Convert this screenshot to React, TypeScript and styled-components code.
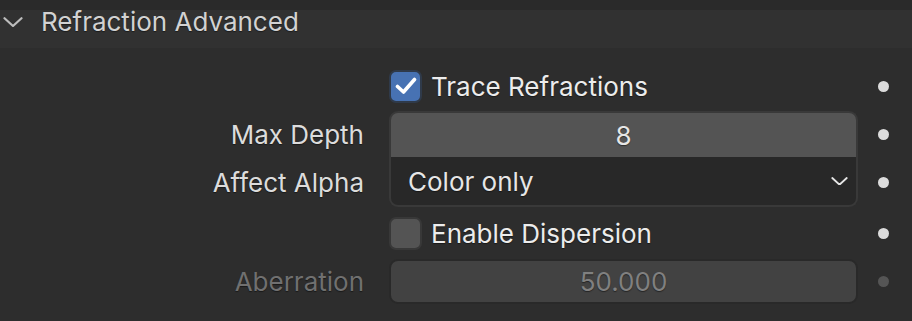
import styled, { createGlobalStyle } from "styled-components"

const GlobalStyle = createGlobalStyle`
  html, body {
    margin: 0;
    padding: 0;
    background: #2d2d2d;
  }
  body {
    width: 912px;
    height: 321px;
    overflow: hidden;
    font-family: Inter, "Noto Sans", sans-serif;
  }
`

const ChevronDown: React.FC<{ size?: number; color?: string }> = ({ size = 20, color = "#bdbdbd" }) => (
  <svg width={size} height={size * 0.5} viewBox="0 0 20 10" fill="none" style={{ display: "block" }}>
    <path d="M1.5 1.2 L10 9 L18.5 1.2" stroke={color} strokeWidth="2.2" strokeLinecap="round" strokeLinejoin="round" />
  </svg>
)

const CheckMark: React.FC = () => (
  <svg width="22" height="18" viewBox="0 0 22 18" fill="none" style={{ display: "block" }}>
    <path d="M2.5 9.5 L8.5 15 L19.5 2.5" stroke="#ffffff" strokeWidth="3.6" strokeLinecap="round" strokeLinejoin="round" />
  </svg>
)

type RowProps = { label?: string; height: number; muted?: boolean; children: React.ReactNode }

const PropRow: React.FC<RowProps> = ({ label, height, muted, children }) => (
  <Row $height={height}>
    <Label $muted={muted}>{label}</Label>
    <Control>{children}</Control>
    <DotCell>
      <Dot $muted={muted} />
    </DotCell>
  </Row>
)

const App: React.FC = () => {
  return (
    <>
      <GlobalStyle />
      <Panel>
        <Header>
          <HeaderIcon>
            <ChevronDown />
          </HeaderIcon>
          <HeaderTitle>Refraction Advanced</HeaderTitle>
        </Header>
        <Body>
          <PropRow height={50}>
            <CheckRow>
              <CheckBox $checked>
                <CheckMark />
              </CheckBox>
              <CheckLabel>Trace Refractions</CheckLabel>
            </CheckRow>
          </PropRow>
          <PropRow label="Max Depth" height={46}>
            <NumberField $part="top">8</NumberField>
          </PropRow>
          <PropRow label="Affect Alpha" height={50}>
            <Dropdown>
              <span>Color only</span>
              <ChevronDown size={17} color="#e6e6e6" />
            </Dropdown>
          </PropRow>
          <PropRow height={52}>
            <CheckRow>
              <CheckBox />
              <CheckLabel>Enable Dispersion</CheckLabel>
            </CheckRow>
          </PropRow>
          <PropRow label="Aberration" height={45} muted>
            <NumberField $part="single" $muted>
              50.000
            </NumberField>
          </PropRow>
        </Body>
      </Panel>
    </>
  )
}

export default App

const Panel = styled.div`
  width: 912px;
  height: 321px;
  background: #2d2d2d;
  color: #e6e6e6;
  font-size: 26px;
  text-shadow: 0 1px 1px rgba(0, 0, 0, 0.45);
`

const Header = styled.div`
  height: 38px;
  border-top: 10px solid #2a2a2a;
  background: #313131;
  display: flex;
  align-items: flex-start;
  line-height: 24px;
`

const HeaderIcon = styled.div`
  width: 41px;
  padding-left: 3px;
  padding-top: 7px;
  box-sizing: border-box;
  display: flex;
`

const HeaderTitle = styled.div`
  color: #d2d2d2;
  font-size: 26px;
`

const Body = styled.div`
  padding-top: 13px;
`

const Row = styled.div<{ $height: number }>`
  height: ${(p) => p.$height}px;
  display: grid;
  grid-template-columns: 389px 469px 50px;
  align-items: center;
`

const Label = styled.div<{ $muted?: boolean }>`
  text-align: right;
  padding-right: 25px;
  color: ${(p) => (p.$muted ? "#707070" : "#dcdcdc")};
`

const Control = styled.div`
  height: 100%;
  display: flex;
  align-items: center;
`

const DotCell = styled.div`
  display: flex;
  justify-content: center;
`

const Dot = styled.div<{ $muted?: boolean }>`
  width: 11px;
  height: 11px;
  border-radius: 50%;
  background: ${(p) => (p.$muted ? "#555555" : "#dcdcdc")};
`

const CheckRow = styled.div`
  display: flex;
  align-items: center;
  gap: 9px;
`

const CheckBox = styled.div<{ $checked?: boolean }>`
  width: 33px;
  height: 33px;
  box-sizing: border-box;
  border-radius: 7px;
  border: 2px solid ${(p) => (p.$checked ? "#2f3a4a" : "#383838")};
  background: ${(p) => (p.$checked ? "#4772b3" : "#545454")};
  display: flex;
  align-items: center;
  justify-content: center;
`

const CheckLabel = styled.span`
  color: #ececec;
`

const NumberField = styled.div<{ $part: "top" | "single"; $muted?: boolean }>`
  width: 100%;
  height: 100%;
  box-sizing: border-box;
  display: flex;
  align-items: center;
  justify-content: center;
  background: ${(p) => (p.$muted ? "#424242" : "#545454")};
  color: ${(p) => (p.$muted ? "#808080" : "#e6e6e6")};
  border: 2px solid ${(p) => (p.$muted ? "#292929" : "#393939")};
  border-bottom: ${(p) => (p.$part === "top" ? "none" : undefined)};
  border-radius: ${(p) => (p.$part === "top" ? "9px 9px 0 0" : "9px")};
`

const Dropdown = styled.div`
  width: 100%;
  height: 100%;
  box-sizing: border-box;
  display: flex;
  align-items: center;
  justify-content: space-between;
  padding: 0 8px 0 17px;
  background: #282828;
  color: #e6e6e6;
  border: 2px solid #393939;
  border-top: none;
  border-radius: 0 0 9px 9px;
`
